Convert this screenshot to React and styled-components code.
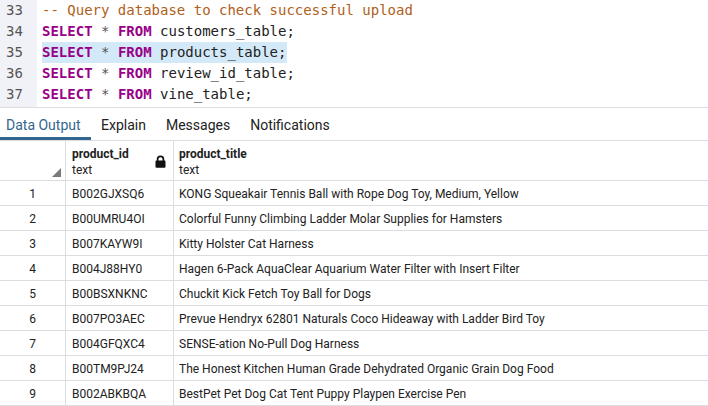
import React from 'react';
import styled, { createGlobalStyle } from 'styled-components';

const GlobalStyle = createGlobalStyle`
  html, body {
    margin: 0;
    padding: 0;
    background: #fff;
    overflow: hidden;
  }
  * {
    box-sizing: border-box;
  }
`;

const LINES = [
  { no: 33, comment: '-- Query database to check successful upload' },
  { no: 34, table: 'customers_table' },
  { no: 35, table: 'products_table', selected: true },
  { no: 36, table: 'review_id_table' },
  { no: 37, table: 'vine_table' },
];

const ROWS = [
  ['B002GJXSQ6', 'KONG Squeakair Tennis Ball with Rope Dog Toy, Medium, Yellow'],
  ['B00UMRU4OI', 'Colorful Funny Climbing Ladder Molar Supplies for Hamsters'],
  ['B007KAYW9I', 'Kitty Holster Cat Harness'],
  ['B004J88HY0', 'Hagen 6-Pack AquaClear Aquarium Water Filter with Insert Filter'],
  ['B00BSXNKNC', 'Chuckit Kick Fetch Toy Ball for Dogs'],
  ['B007PO3AEC', 'Prevue Hendryx 62801 Naturals Coco Hideaway with Ladder Bird Toy'],
  ['B004GFQXC4', 'SENSE-ation No-Pull Dog Harness'],
  ['B00TM9PJ24', 'The Honest Kitchen Human Grade Dehydrated Organic Grain Dog Food'],
  ['B002ABKBQA', 'BestPet Pet Dog Cat Tent Puppy Playpen Exercise Pen'],
];

const TABS = ['Data Output', 'Explain', 'Messages', 'Notifications'];

function LockIcon() {
  return (
    <svg width="11" height="13" viewBox="0 0 11 13">
      <path d="M2.6 6V4.2a2.9 2.9 0 0 1 5.8 0V6" fill="none" stroke="#111" strokeWidth="1.7" />
      <rect x="0.5" y="5.6" width="10" height="7.2" rx="1" fill="#111" />
    </svg>
  );
}

function App() {
  return (
    <Page>
      <GlobalStyle />
      <Editor>
        {LINES.map((line) => (
          <CodeLine key={line.no}>
            <Gutter>{line.no}</Gutter>
            <Code>
              <Selection $selected={line.selected}>
                {line.comment ? (
                  <Comment>{line.comment}</Comment>
                ) : (
                  <>
                    <Keyword>SELECT</Keyword> <Operator>*</Operator> <Keyword>FROM</Keyword>{' '}
                    {line.table};
                  </>
                )}
              </Selection>
            </Code>
          </CodeLine>
        ))}
        <GutterFill />
      </Editor>

      <TabBar>
        {TABS.map((tab, i) => (
          <Tab key={tab} $active={i === 0}>
            {tab}
          </Tab>
        ))}
      </TabBar>

      <Grid>
        <HeaderRow>
          <CornerCell>
            <SortMark />
          </CornerCell>
          <HeaderCell>
            <HeaderText>
              <ColName>product_id</ColName>
              <ColType>text</ColType>
            </HeaderText>
            <LockIcon />
          </HeaderCell>
          <HeaderCell $last>
            <HeaderText>
              <ColName>product_title</ColName>
              <ColType>text</ColType>
            </HeaderText>
          </HeaderCell>
        </HeaderRow>
        {ROWS.map(([id, title], i) => (
          <Row key={id}>
            <NumCell>{i + 1}</NumCell>
            <Cell>{id}</Cell>
            <Cell $last>{title}</Cell>
          </Row>
        ))}
      </Grid>
    </Page>
  );
}
export default App;

const Page = styled.div`
  width: 708px;
  height: 406px;
  display: flex;
  flex-direction: column;
  overflow: hidden;
  background: #fff;
`;

const Editor = styled.div`
  height: 109px;
  border-bottom: 1px solid #dcdde2;
  display: flex;
  flex-direction: column;
  background: #fff;
`;

const CodeLine = styled.div`
  display: flex;
  height: 21px;
  font-family: 'DejaVu Sans Mono', monospace;
  font-size: 14px;
  line-height: 21px;
  color: #222;
`;

const Gutter = styled.div`
  width: 37px;
  flex: none;
  padding-left: 6px;
  color: #555;
  background: #f0f2f7;
`;

const GutterFill = styled.div`
  width: 37px;
  flex: 1;
  background: #f0f2f7;
`;

const Code = styled.div`
  padding-left: 5px;
  white-space: pre;
`;

const Selection = styled.span`
  display: inline-block;
  height: 21px;
  background: ${({ $selected }) => ($selected ? '#d3e9f8' : 'transparent')};
`;

const Comment = styled.span`
  color: #b0601a;
`;

const Keyword = styled.span`
  color: #990088;
  font-weight: bold;
`;

const Operator = styled.span`
  color: #555;
`;

const TabBar = styled.div`
  display: flex;
  height: 33px;
  border-bottom: 1px solid #dcdde2;
  font-family: Roboto, 'Liberation Sans', sans-serif;
  font-size: 14px;
`;

const Tab = styled.div`
  height: 32px;
  padding: 4px 10px 0 6px;
  margin-right: 4px;
  display: flex;
  align-items: center;
  color: ${({ $active }) => ($active ? '#326690' : '#222')};
  border-bottom: 3px solid ${({ $active }) => ($active ? '#326690' : 'transparent')};
  &:first-child {
    width: 91px;
  }
`;

const Grid = styled.div`
  display: flex;
  flex-direction: column;
  font-family: Roboto, 'Liberation Sans', sans-serif;
  font-size: 12px;
  color: #222;
`;

const HeaderRow = styled.div`
  display: grid;
  grid-template-columns: 66px 108px 1fr;
  height: 40px;
  border-bottom: 1px solid #dcdde2;
`;

const Row = styled.div`
  display: grid;
  grid-template-columns: 66px 108px 1fr;
  height: 25px;
  border-bottom: 1px solid #dcdde2;
`;

const Cell = styled.div`
  display: flex;
  align-items: center;
  padding: 1px ${({ $last }) => ($last ? '5px' : '6px')} 0;
  white-space: nowrap;
  overflow: hidden;
  border-right: ${({ $last }) => ($last ? 'none' : '1px solid #dcdde2')};
`;

const NumCell = styled(Cell)`
  justify-content: center;
  padding: 1px 0 0;
`;

const CornerCell = styled.div`
  position: relative;
  border-right: 1px solid #dcdde2;
`;

const SortMark = styled.div`
  position: absolute;
  right: 4px;
  bottom: 3px;
  width: 0;
  height: 0;
  border-left: 9px solid transparent;
  border-bottom: 9px solid #7a7a7a;
`;

const HeaderCell = styled(Cell)`
  justify-content: space-between;
  align-items: center;
  padding: 2px 7px 0 ${({ $last }) => ($last ? '5px' : '6px')};
`;

const HeaderText = styled.div`
  display: flex;
  flex-direction: column;
  gap: 2px;
`;

const ColName = styled.span`
  font-weight: bold;
  line-height: 14px;
`;

const ColType = styled.span`
  line-height: 14px;
`;
